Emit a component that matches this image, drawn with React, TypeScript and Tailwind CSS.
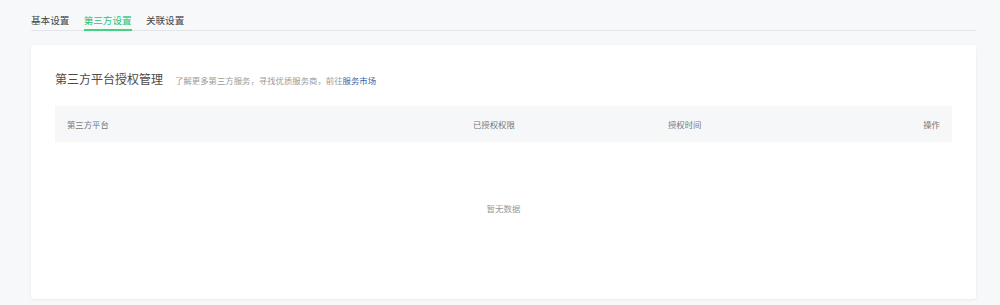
import React from "react";

export default function App() {
  const font = { fontFamily: '"Noto Sans CJK SC", "Noto Sans", sans-serif' };
  return (
    <div
      className="min-h-[305px] w-[1000px] bg-[#f7f8fa] pl-[31px] pr-[24px] pt-[13px]"
      style={font}
    >
      <div className="flex gap-[14.3px] border-b border-[#e3e5e8]">
        <div className="-mb-px border-b-2 border-transparent pb-[2px] text-[9.6px] leading-[14px] text-[#444]">
          基本设置
        </div>
        <div className="-mb-px border-b-2 border-[#45d084] pb-[2px] text-[9.6px] leading-[14px] text-[#2fbf71]">
          第三方设置
        </div>
        <div className="-mb-px border-b-2 border-transparent pb-[2px] text-[9.6px] leading-[14px] text-[#444]">
          关联设置
        </div>
      </div>

      <div className="mt-[14px] h-[254px] rounded-[3px] bg-white px-[24px] pt-[27px] shadow-[0_1px_3px_rgba(0,0,0,0.06)]">
        <div className="flex items-baseline">
          <div className="text-[12px] leading-[14px] text-[#4a4a4a]">第三方平台授权管理</div>
          <div className="ml-[12px] text-[8.4px] leading-[14px] text-[#9a9a9a]">
            了解更多第三方服务，寻找优质服务商，前往
            <span className="text-[#3d5fa6]">服务市场</span>
          </div>
        </div>

        <div className="mt-[19px] grid h-[36px] grid-cols-[406px_195px_1fr_auto] items-center bg-[#f6f7f9] pl-[12px] pr-[12px] text-[8.4px] text-[#777]">
          <div>第三方平台</div>
          <div>已授权权限</div>
          <div>授权时间</div>
          <div className="text-right">操作</div>
        </div>

        <div className="flex h-[132px] items-center justify-center text-[8.5px] text-[#999]">
          暂无数据
        </div>
      </div>
    </div>
  );
}
